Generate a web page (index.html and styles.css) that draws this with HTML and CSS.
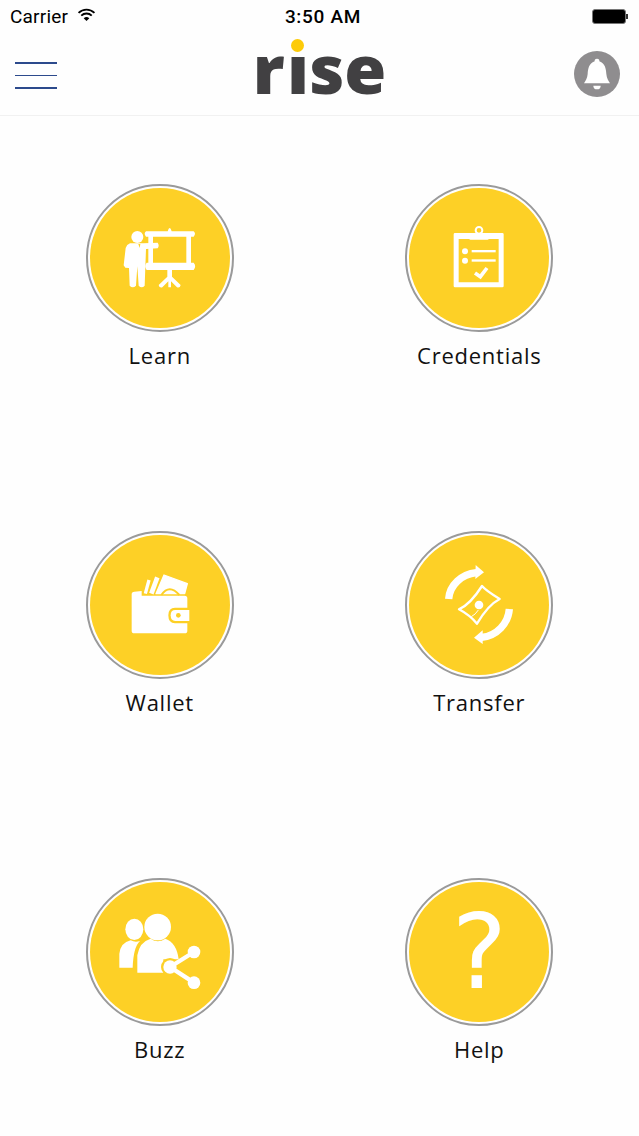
FILE: index.html
```html
<!DOCTYPE html>
<html lang="en">
<head>
  <meta charset="UTF-8" />
  <meta name="viewport" content="width=device-width, initial-scale=1.0"/>
  <title>Rise</title>
  <link rel="stylesheet" href="styles.css">
</head>
<body>

  <!-- Status bar -->
  <div class="status-bar">
    <div class="carrier">
      <span>Carrier</span>
      <svg class="wifi" viewBox="0 0 20 15" width="19" height="14">
        <path d="M1.5 5.2 A12 12 0 0 1 18.5 5.2" fill="none" stroke="#000" stroke-width="2"/>
        <path d="M4.4 8.2 A8 8 0 0 1 15.6 8.2" fill="none" stroke="#000" stroke-width="2"/>
        <path d="M7 11 A4.4 4.4 0 0 1 13 11 L10 14 Z" fill="#000"/>
      </svg>
    </div>
    <div class="time">3:50 AM</div>
    <div class="battery"><div class="battery-body"></div><div class="battery-tip"></div></div>
  </div>

  <!-- Nav -->
  <header class="nav">
    <div class="burger"><span></span><span></span><span></span></div>
    <div class="logo"><span class="logo-r">r</span>ise<span class="logo-dot"></span></div>
    <div class="bell">
      <svg viewBox="762 153 138 138" width="46" height="46">
        <path d="M831 176 a7 7 0 0 1 7 8 C856 190 858 208 859 222 C860 236 866 243 870 250 L792 250 C796 243 802 236 803 222 C804 208 806 190 824 184 a7 7 0 0 1 7 -8 Z" fill="#fff"/>
        <path d="M820 257 L842 257 A11 11 0 0 1 820 257 Z" fill="#fff"/>
      </svg>
    </div>
  </header>

  <!-- Menu -->
  <main class="menu">
    <a class="tile">
      <div class="disc">
        <svg viewBox="30 30 420 420" width="140" height="140">
          <circle cx="172" cy="177" r="18" fill="#fff"/>
          <path d="M150 196 L190 196 L233 194 Q239 203 233 211 L198 213 L196 268 L194 323 Q185 332 176 323 L172 265 L168 323 Q158 332 149 323 L147 270 L136 269 L131 262 L137 210 Q140 200 150 196 Z" fill="#fff"/>
          <path d="M175 198 L181 198 L179 210 Z" fill="#fdd026"/>
          <path d="M263 160 Q269 140 275 160 L341 160 Q349 167 341 176 L333 176 L333 254 L341 254 Q350 265 341 276 L276 276 L276 296 L302 321 Q300 331 291 328 L273 310 L273 328 L265 328 L265 310 L247 328 Q238 331 236 321 L262 296 L262 276 L200 276 Q191 265 200 254 L205 254 L205 176 L198 176 Q190 167 198 160 Z M219 176 L219 254 L319 254 L319 176 Z" fill="#fff" fill-rule="evenodd"/>
        </svg>
      </div>
      <span class="tile-label">Learn</span>
    </a>

    <a class="tile">
      <div class="disc">
        <svg viewBox="28 30 420 420" width="140" height="140">
          <path d="M166 165 L308 165 Q312 165 312 169 L312 324 Q312 328 308 328 L166 328 Q162 328 162 324 L162 169 Q162 165 166 165 Z M177 183 L177 313 L297 313 L297 183 Z" fill="#fff" fill-rule="evenodd"/>
          <rect x="208" y="166" width="60" height="19" rx="4" fill="#fff"/>
          <circle cx="238" cy="157" r="10" fill="none" stroke="#fff" stroke-width="6"/>
          <circle cx="196" cy="220" r="9" fill="#fff"/>
          <circle cx="196" cy="248" r="9" fill="#fff"/>
          <rect x="216" y="216" width="72" height="7" fill="#fff"/>
          <rect x="216" y="244" width="72" height="7" fill="#fff"/>
          <path d="M226 285 L242 296 L262 270" fill="none" stroke="#fff" stroke-width="11"/>
        </svg>
      </div>
      <span class="tile-label">Credentials</span>
    </a>

    <a class="tile">
      <div class="disc">
        <svg viewBox="30 30 420 420" width="140" height="140">
          <path d="M163 200 L185 198 L185 212 L314 212 Q322 212 322 220 L322 248 L285 248 Q265 248 265 271 Q265 295 285 295 L322 295 L322 317 Q322 325 314 325 L163 325 Q155 325 155 317 L155 208 Q155 200 163 200 Z" fill="#fff"/>
          <path d="M286 255 L328 255 L328 288 L286 288 Q272 288 272 271 Q272 255 286 255 Z" fill="#fff"/>
          <circle cx="295" cy="271" r="7" fill="#fdd026"/>
          <path d="M207 165 L196 206" stroke="#fff" stroke-width="10" fill="none"/>
          <path d="M232 157 L214 206" stroke="#fff" stroke-width="14" fill="none"/>
          <path d="M252 150 L322 176 L314 206 L228 206 Z" fill="#fff" stroke="#fff" stroke-width="4" stroke-linejoin="round"/>
          <path d="M244 210 Q268 176 298 210" fill="none" stroke="#fdd026" stroke-width="6"/>
        </svg>
      </div>
      <span class="tile-label">Wallet</span>
    </a>

    <a class="tile">
      <div class="disc">
        <svg viewBox="28 30 420 420" width="140" height="140">
          <path d="M147 222 C150 180 185 148 230 143" fill="none" stroke="#fff" stroke-width="22"/>
          <path d="M228 120 L253 142 L227 162 Z" fill="#fff"/>
          <path d="M329 252 C326 295 292 332 246 337" fill="none" stroke="#fff" stroke-width="22"/>
          <path d="M249 316 L223 338 L249 357 Z" fill="#fff"/>
          <path d="M178 253 Q212 238 247 183 Q258 196 300 222 Q265 240 232 296 Q210 270 178 253 Z" fill="none" stroke="#fff" stroke-width="7" stroke-linejoin="round"/>
          <circle cx="238" cy="240" r="13" fill="#fff"/>
          <path d="M215 275 Q228 268 236 255" fill="none" stroke="#fff" stroke-width="3"/>
        </svg>
      </div>
      <span class="tile-label">Transfer</span>
    </a>

    <a class="tile">
      <div class="disc">
        <svg viewBox="30 30 420 420" width="140" height="140">
          <ellipse cx="163" cy="172" rx="27" ry="32" fill="#fff"/>
          <path d="M118 287 L118 245 Q122 212 152 205 Q165 212 180 207 Q160 225 158 287 Z" fill="#fff"/>
          <circle cx="233" cy="165" r="40" fill="#fff"/>
          <path d="M172 302 L172 250 Q178 210 212 200 Q233 215 256 200 Q290 212 296 262 L250 262 L250 302 Z" fill="#fff"/>
          <circle cx="270" cy="285" r="27" fill="#fdd026"/>
          <path d="M342 240 L270 285 L342 332" fill="none" stroke="#fff" stroke-width="13"/>
          <circle cx="270" cy="285" r="20" fill="#fff"/>
          <circle cx="342" cy="240" r="19" fill="#fff"/>
          <circle cx="342" cy="332" r="19" fill="#fff"/>
        </svg>
      </div>
      <span class="tile-label">Buzz</span>
    </a>

    <a class="tile">
      <div class="disc">
        <span class="question">?</span>
      </div>
      <span class="tile-label">Help</span>
    </a>
  </main>

</body>
</html>
```

FILE: styles.css
```css
* {
  box-sizing: border-box;
}

body, html {
  margin: 0;
  padding: 0;
  background: #fefefe;
  color: #111;
  font-family: 'Open Sans', sans-serif;
}

.status-bar {
  height: 32px;
  padding: 0 10px;
  display: grid;
  grid-template-columns: 1fr auto 1fr;
  align-items: center;
  font-family: Roboto, sans-serif;
  font-size: 19px;
  color: #000;
}

.carrier {
  display: flex;
  align-items: center;
  gap: 9px;
  letter-spacing: 0.2px;
}

.wifi {
  margin-top: -3px;
}

.time {
  font-weight: 500;
  letter-spacing: 0.7px;
  margin-left: 7px;
}

.battery {
  display: flex;
  align-items: center;
  justify-content: flex-end;
  padding-right: 1px;
}

.battery-body {
  width: 34px;
  height: 15px;
  background: #000;
  border: 1px solid #777;
  border-radius: 3px;
}

.battery-tip {
  width: 2px;
  height: 5px;
  background: #333;
}

.nav {
  height: 84px;
  padding: 0 19px;
  display: grid;
  grid-template-columns: 1fr auto 1fr;
  align-items: center;
  border-bottom: 1px solid #f1f1f1;
}

.burger {
  width: 42px;
  margin: 4px 0 0 -4px;
  display: flex;
  flex-direction: column;
  gap: 11px;
}

.burger span {
  display: block;
  height: 1.5px;
  background: #2c4a8c;
}

.logo {
  position: relative;
  font-size: 68px;
  line-height: 70px;
  font-weight: 800;
  color: #414042;
  margin-bottom: 11px;
}

.logo-r {
  letter-spacing: 2.5px;
}

.logo-dot {
  position: absolute;
  left: 38px;
  top: 6px;
  width: 13px;
  height: 13px;
  border-radius: 50%;
  background: #fdcb08;
  box-shadow: 0 0 0 3px #fefefe;
}

.bell {
  justify-self: end;
  width: 46px;
  height: 46px;
  border-radius: 50%;
  background: #8f8d8f;
}

.bell svg {
  display: block;
}

.menu {
  padding-top: 68px;
  display: grid;
  grid-template-columns: 1fr 1fr;
  grid-template-rows: 347px 347px auto;
}

.tile {
  display: flex;
  flex-direction: column;
  align-items: center;
}

.disc {
  width: 148px;
  height: 148px;
  padding: 2px;
  border: 2px solid #9a9a9a;
  border-radius: 50%;
  background: #fdd026 content-box;
  display: flex;
  align-items: center;
  justify-content: center;
}

.disc svg {
  display: block;
}

.question {
  color: #fff;
  font-family: 'DejaVu Sans', sans-serif;
  font-size: 104px;
  line-height: 140px;
}

.tile-label {
  margin-top: 7px;
  font-size: 22px;
  line-height: 32px;
  letter-spacing: 0.75px;
}
```
